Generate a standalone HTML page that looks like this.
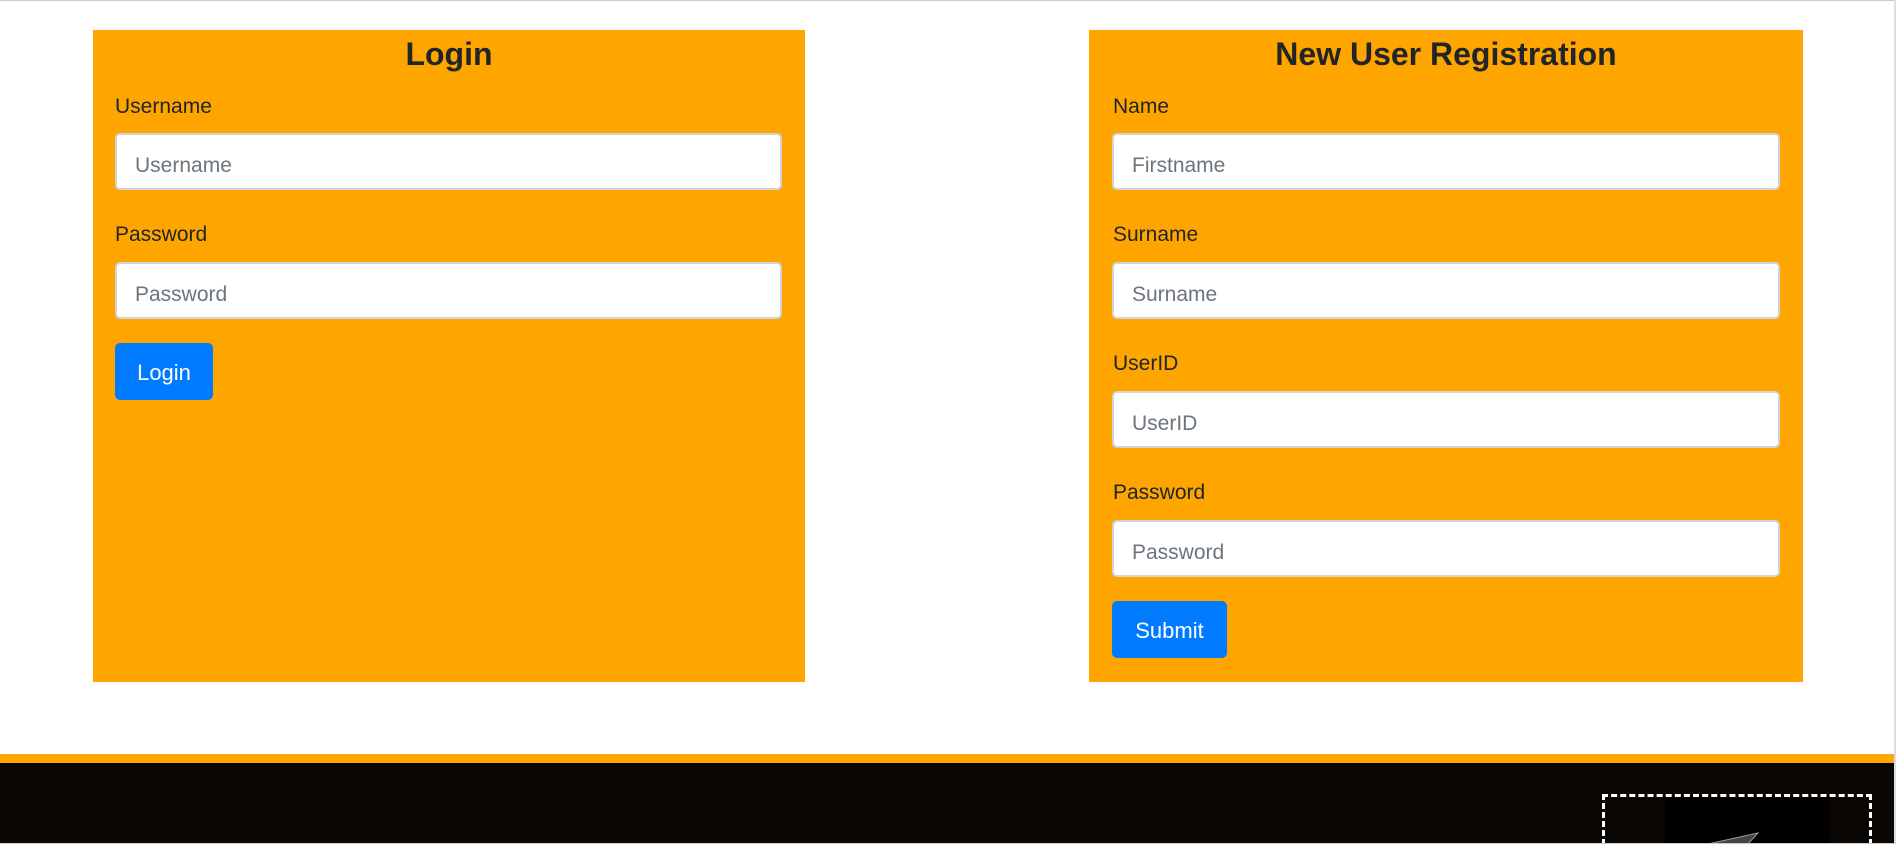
<!DOCTYPE html>
<html><head><meta charset="utf-8"><style>
*{box-sizing:border-box;margin:0;padding:0}
body{width:1896px;height:844px;overflow:hidden;background:#fff;font-family:"Liberation Sans",sans-serif;position:relative;color:#212529}
.topline{position:absolute;left:0;top:0;width:1896px;height:1px;background:#ccc}
.box{position:absolute;background:#ffa500;top:30px;height:652px}
h2{position:absolute;left:0;right:0;top:32px;text-align:center;font-size:32px;font-weight:bold;line-height:1;color:#212529}
.lbl{position:absolute;font-size:21px;line-height:1;color:#212529}
.inp{position:absolute;height:57px;background:#fff;border:2px solid #ced4da;border-radius:5px;font-size:21px;color:#6c757d;padding-left:18px;padding-top:4px;line-height:53px}
.btn{position:absolute;height:57px;background:#007bff;color:#fff;border-radius:5px;font-size:22px;text-align:center;line-height:59px}
</style></head><body>
<div class="topline"></div>
<div class="box" style="left:93px;width:712px">
<h2 style="top:8px">Login</h2>
</div>
<div class="lbl" style="left:115px;top:96px">Username</div>
<div class="inp" style="left:115px;top:133px;width:667px">Username</div>
<div class="lbl" style="left:115px;top:224px">Password</div>
<div class="inp" style="left:115px;top:262px;width:667px">Password</div>
<div class="btn" style="left:115px;top:343px;width:98px">Login</div>

<div class="box" style="left:1089px;width:714px">
<h2 style="top:8px">New User Registration</h2>
</div>
<div class="lbl" style="left:1113px;top:96px">Name</div>
<div class="inp" style="left:1112px;top:133px;width:668px">Firstname</div>
<div class="lbl" style="left:1113px;top:224px">Surname</div>
<div class="inp" style="left:1112px;top:262px;width:668px">Surname</div>
<div class="lbl" style="left:1113px;top:353px">UserID</div>
<div class="inp" style="left:1112px;top:391px;width:668px">UserID</div>
<div class="lbl" style="left:1113px;top:482px">Password</div>
<div class="inp" style="left:1112px;top:520px;width:668px">Password</div>
<div class="btn" style="left:1112px;top:601px;width:115px">Submit</div>

<div style="position:absolute;left:0;top:754px;width:1894px;height:9px;background:#ffa500"></div>
<div style="position:absolute;left:0;top:763px;width:1894px;height:81px;background:#0a0603"></div>
<div style="position:absolute;left:1665px;top:796px;width:165px;height:48px;background:#000"></div>
<div style="position:absolute;left:1602px;top:794px;width:270px;height:60px;border:3px dashed #fff"></div>
<svg style="position:absolute;left:1700px;top:828px" width="60" height="16"><path d="M8 16 L58 5 L48 16 Z" fill="#444" stroke="#999" stroke-width="1"/></svg>
<div style="position:absolute;left:1894px;top:0;width:2px;height:844px;background:#ddd"></div>
<div style="position:absolute;left:0;top:843px;width:1896px;height:1px;background:#ccc"></div>
</body></html>
